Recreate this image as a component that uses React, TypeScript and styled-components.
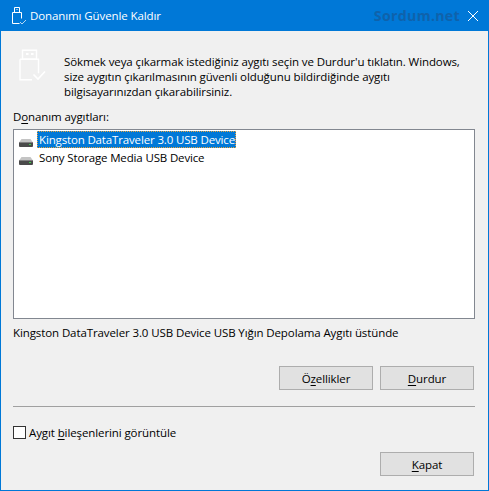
import React from 'react';
import styled, { createGlobalStyle } from 'styled-components';

const GlobalStyle = createGlobalStyle`
  html, body {
    margin: 0;
    padding: 0;
    background: #f0f0f0;
  }
`;

const Window = styled.div`
  box-sizing: border-box;
  width: 489px;
  height: 491px;
  display: flex;
  flex-direction: column;
  border: 1px solid #0078d7;
  border-top: 0;
  background: #f0f0f0;
  color: #000;
  font-family: "Open Sans", "Noto Sans", sans-serif;
  font-size: 11.5px;
  line-height: 15px;
  letter-spacing: -0.1px;
  overflow: hidden;
`;

const TitleBar = styled.header`
  flex: none;
  height: 31px;
  margin: 0 -1px;
  padding-left: 12px;
  display: flex;
  align-items: center;
  background: #0078d7;
  color: #fff;
`;

const TitleText = styled.span`
  margin-left: 4px;
`;

const Watermark = styled.span`
  margin-left: auto;
  font-size: 14.2px;
  font-weight: 700;
  letter-spacing: 0.3px;
  color: #0f62ab;
`;

const CloseButton = styled.button`
  width: 20px;
  height: 31px;
  margin-left: 3px;
  margin-right: 6px;
  padding: 0;
  border: 0;
  background: transparent;
  display: flex;
  align-items: center;
  justify-content: center;
`;

const Body = styled.main`
  flex: 1;
  display: flex;
  flex-direction: column;
  padding: 0 13px 0 12px;
`;

const Intro = styled.section`
  display: flex;
  height: 69px;
  padding-top: 19px;
  box-sizing: border-box;
`;

const IntroIcon = styled.div`
  flex: none;
  width: 39px;
  padding-left: 6px;
  margin-top: -1px;
  box-sizing: border-box;
`;

const IntroText = styled.p`
  margin: 4px 0 0 12px;
  white-space: nowrap;
`;

const FieldLabel = styled.label`
  display: block;
  height: 16px;
  margin-top: 9px;
`;

const ListBox = styled.ul`
  box-sizing: border-box;
  width: 462px;
  height: 190px;
  margin: 4px 0 0;
  padding: 1px 0 0 5px;
  list-style: none;
  background: #fff;
  border: 1px solid #828790;
`;

const ListRow = styled.li`
  display: flex;
  align-items: flex-start;
  height: 18px;
`;

const RowLabel = styled.span<{ $selected?: boolean }>`
  margin-left: 4px;
  padding: 0 1px 0 2px;
  height: 17px;
  line-height: 17px;
  letter-spacing: -0.15px;
  box-sizing: border-box;
  background: ${({ $selected }) => ($selected ? '#0078d7' : 'transparent')};
  color: ${({ $selected }) => ($selected ? '#fff' : '#000')};
  outline: ${({ $selected }) => ($selected ? '1px dotted #e8a33d' : 'none')};
  outline-offset: -1px;
`;

const DriveGlyph = styled.svg`
  flex: none;
  margin-top: 8px;
`;

const StatusText = styled.div`
  margin-top: 6px;
  height: 15px;
`;

const ButtonRow = styled.div<{ $top: number }>`
  display: flex;
  justify-content: flex-end;
  gap: 7px;
  width: 461px;
  margin-top: ${({ $top }) => $top}px;
`;

const DialogButton = styled.button`
  box-sizing: border-box;
  width: 94px;
  height: 24px;
  padding: 0;
  border: 1px solid #adadad;
  background: #e1e1e1;
  color: #000;
  font: inherit;
  letter-spacing: inherit;
`;

const Separator = styled.hr`
  width: 462px;
  height: 1px;
  margin: 16px 0 0;
  border: 0;
  background: #a0a0a0;
`;

const CheckRow = styled.label`
  display: flex;
  align-items: center;
  height: 15px;
  margin-top: 18px;
`;

const CheckBox = styled.span`
  flex: none;
  box-sizing: border-box;
  width: 13px;
  height: 13px;
  margin-right: 3px;
  background: #fff;
  border: 1px solid #333;
`;

const Key = styled.span`
  text-decoration: underline;
  text-underline-offset: 2px;
  text-decoration-thickness: 1px;
`;

const UsbSmall = () => (
  <svg width="14" height="20" viewBox="0 0 14 20" fill="none" stroke="#fff" strokeWidth="1">
    <path d="M2.5 1.5h5v5h-5zM.5 6.5h9v6M.5 6.5v11h7" />
    <path d="M4 3.5h.5M5.5 3.5h.5" />
    <path d="M8 16l2 2 4-4" stroke="#b5d6f2" />
  </svg>
);

const UsbLarge = () => (
  <svg width="27" height="33" viewBox="0 0 27 33" fill="none" stroke="#fff" strokeWidth="1.4">
    <path d="M3.5 1.2h14v9h-14z" />
    <path d="M1 10.2h18.5v14M1 10.2v20.6h12" />
    <path d="M7 5h2.5M12 5h2.5" strokeWidth="2" />
    <path d="M14.5 25.5l4.5 4.5 7-7.5" strokeWidth="1.6" />
  </svg>
);

const DriveIcon = () => (
  <DriveGlyph width="14" height="8" viewBox="0 0 14 8">
    <path d="M2.5 0h9L14 3.5H0z" fill="#c4c4c4" />
    <rect x="0" y="3" width="14" height="5" rx="1" fill="#4a4a4a" />
    <rect x="0" y="3" width="14" height="1" fill="#808080" />
    <rect x="10" y="5" width="2" height="1" fill="#3fd24a" />
  </DriveGlyph>
);

const CloseIcon = () => (
  <svg width="10" height="10" viewBox="0 0 10 10" stroke="#fff" strokeWidth="1" fill="none">
    <path d="M0 0l10 10M10 0L0 10" />
  </svg>
);

const devices = [
  { name: 'Kingston DataTraveler 3.0 USB Device', selected: true },
  { name: 'Sony Storage Media USB Device', selected: false },
];

const App: React.FC = () => {
  return (
    <>
      <GlobalStyle />
      <Window>
        <TitleBar>
          <UsbSmall />
          <TitleText>Donanımı Güvenle Kaldır</TitleText>
          <Watermark>Sordum.net</Watermark>
          <CloseButton aria-label="Kapat">
            <CloseIcon />
          </CloseButton>
        </TitleBar>
        <Body>
          <Intro>
            <IntroIcon>
              <UsbLarge />
            </IntroIcon>
            <IntroText>
              Sökmek veya çıkarmak istediğiniz aygıtı seçin ve Durdur'u tıklatın. Windows,
              <br />
              size aygıtın çıkarılmasının güvenli olduğunu bildirdiğinde aygıtı
              <br />
              bilgisayarınızdan çıkarabilirsiniz.
            </IntroText>
          </Intro>
          <FieldLabel>
            D<Key>o</Key>nanım aygıtları:
          </FieldLabel>
          <ListBox>
            {devices.map(device => (
              <ListRow key={device.name}>
                <DriveIcon />
                <RowLabel $selected={device.selected}>{device.name}</RowLabel>
              </ListRow>
            ))}
          </ListBox>
          <StatusText>Kingston DataTraveler 3.0 USB Device USB Yığın Depolama Aygıtı üstünde</StatusText>
          <ButtonRow $top={26}>
            <DialogButton>
              Ö<Key>z</Key>ellikler
            </DialogButton>
            <DialogButton>
              <Key>D</Key>urdur
            </DialogButton>
          </ButtonRow>
          <Separator />
          <CheckRow>
            <CheckBox />
            Aygıt&nbsp;<Key>b</Key>ileşenlerini görüntüle
          </CheckRow>
          <ButtonRow $top={12}>
            <DialogButton>
              <Key>K</Key>apat
            </DialogButton>
          </ButtonRow>
        </Body>
      </Window>
    </>
  );
};

export default App;
